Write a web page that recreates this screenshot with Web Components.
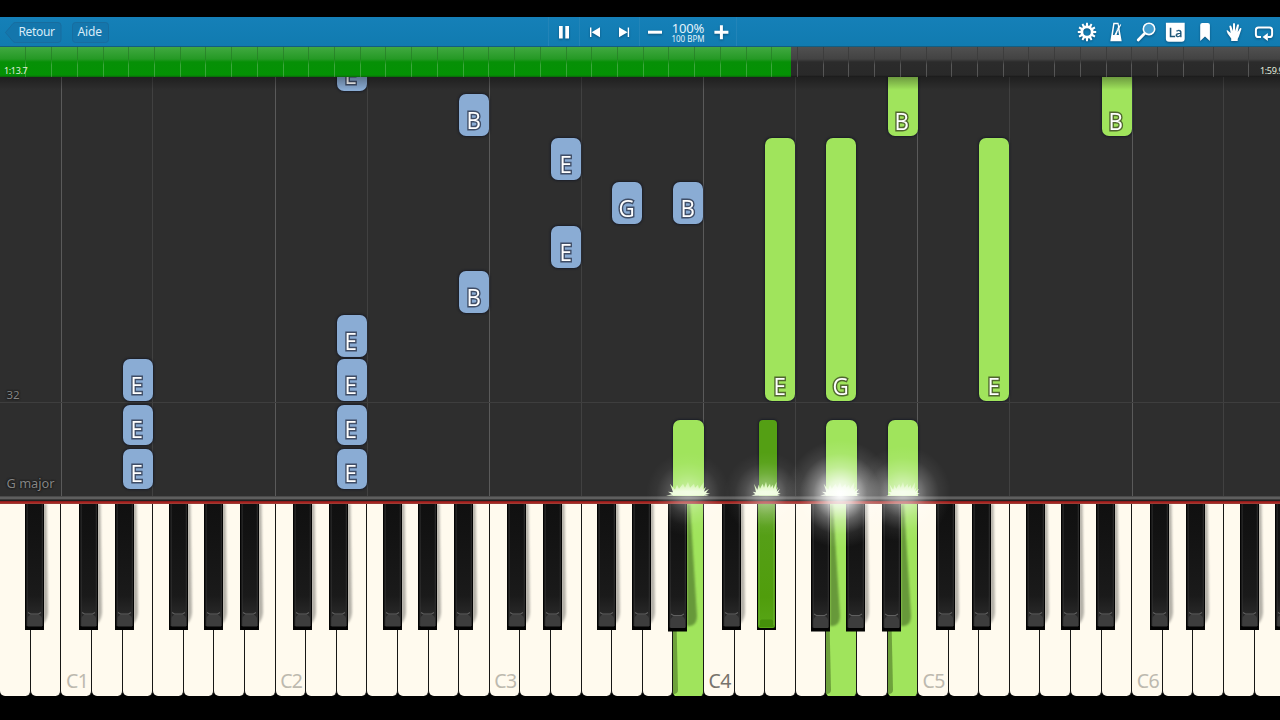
<!DOCTYPE html>
<html lang="fr">
<head>
<meta charset="utf-8">
<title>Piano</title>
<style>
  html, body {
    margin: 0;
    height: 100%;
    overflow: hidden;
    background: #000;
  }
</style>
</head>
<body>
<piano-app></piano-app>

<script>
const WHITE_WIDTH = 30.6;
const WHITE_COUNT = 42;
const OCTAVE = WHITE_WIDTH * 7;

function attach(el, html) {
  const template = document.createElement('template');
  template.innerHTML = html;
  const root = el.attachShadow({ mode: 'open' });
  root.appendChild(template.content.cloneNode(true));
  return root;
}

function gearTeeth() {
  let out = '';
  for (let i = 0; i < 12; i++) {
    out += `<path d="M8.700 4.600L9.100 .8h1.800l.4 3.800z" transform="rotate(${i * 30} 10 10)"/>`;
  }
  return out;
}

const icons = {
  pause: '<path d="M5 4h3.7v12.500H5zM11.300 4H15v12.500h-3.700z"/>',
  prev: '<path d="M5 5.500h1.400v9.500H5zM15 5.300v9.900L6.600 10.200z"/>',
  next: '<path d="M13.700 5.500h1.400v9.500h-1.400zM5 5.300v9.900l8.500-5z"/>',
  minus: '<path d="M3 8.700h14v3H3z"/>',
  plus: '<path d="M8.900 3.200h3v5.500H17.400v3h-5.500v5.500h-3v-5.500H3.400v-3h5.500z"/>',
  gear: gearTeeth() + '<circle cx="10" cy="10" r="5.100" fill="none" stroke="#fff" stroke-width="2.700"/>',
  metronome: '<path fill-rule="evenodd" d="M7.300 .8h5.200l3.200 18.500H4.300zM8.500 2.300L6.900 13h2.200l1.700-4 .7 1-1 3h2.500l-.7-4.500-.8-2.200-.3 0L9 12l3-7-.4-2.700z"/><path d="M9 13L14.700 2.500" stroke="#fff" stroke-width="1.300"/>',
  magnifier: '<path d="M8.800 11.200L2.200 18" stroke="#fff" stroke-width="2.800" stroke-linecap="round"/><circle cx="13" cy="6.900" r="5.700" fill="#469fd0" stroke="#fff" stroke-width="1.600"/>',
  label: '<path d="M.9 .7h18.800v16q0 3-3 3H3.900q-3 0-3-3z"/><text x="10.500" y="15.300" text-anchor="middle" font-size="12.500" fill="#1b5578" stroke="#1b5578" stroke-width=".35">La</text>',
  bookmark: '<path d="M5.200 3q0-2 2-2h5.700q2 0 2 2v16L10 14.600 5.200 19z"/>',
  hand: '<path d="M7.200 19v-2.500L3.600 11.600 2.500 8.500q1-.8 1.800.6l2.400 2L5.300 4q1.300-1.200 2 .3L9 9 9 1.700q1-1.400 2 0L11.200 9l1.900-6.300q1.500-1 1.900.6L13.700 10l2.500-4q1.400-.4 1.200 1L14.900 14.500 13.700 17v2z"/>',
  loop: '<path d="M7 15H4.500q-2.600 0-2.600-2.600V8.200q0-2.600 2.600-2.600h11q2.600 0 2.600 2.600v4.200q0 2.600-2.600 2.600H13.500" fill="none" stroke="#fff" stroke-width="2"/><path d="M13.800 11v8L8.600 15z"/>'
};

class PianoIcon extends HTMLElement {
  connectedCallback() {
    attach(this, `
      <style>
        :host {
          display: flex;
          align-items: center;
          justify-content: center;
          width: var(--icon-box, 29.5px);
        }
        svg {
          width: 20px;
          height: 20px;
          overflow: visible;
          fill: #fff;
          filter: drop-shadow(0 1px 1px rgb(0 30 60 / 45%));
        }
      </style>
      <svg viewBox="0 0 20 20">${icons[this.getAttribute('name')]}</svg>
    `);
  }
}

class ToolButton extends HTMLElement {
  connectedCallback() {
    const back = this.hasAttribute('back');
    const shape = back
      ? 'M.5 10.500L8 1.500Q9 .5 10.500 .5H53q3 0 3 3v14q0 3-3 3H10.500Q9 20.500 8 19.500z'
      : 'M3.500 .5h30q3 0 3 3v14q0 3-3 3h-30q-3 0-3-3v-14q0-3 3-3z';
    attach(this, `
      <style>
        :host {
          display: grid;
          width: ${back ? 57 : 37}px;
          height: 21px;
        }
        svg, span {
          grid-area: 1 / 1;
        }
        svg {
          width: 100%;
          height: 100%;
        }
        span {
          padding-left: ${back ? 13.5 : 5.5}px;
          font-size: 12px;
          line-height: 20px;
          letter-spacing: ${back ? -0.35 : -0.1}px;
          color: #d8ecf8;
        }
      </style>
      <svg><path d="${shape}" fill="#1476ac" stroke="#186d9f"/></svg>
      <span><slot></slot></span>
    `);
  }
}

class ToolBar extends HTMLElement {
  connectedCallback() {
    attach(this, `
      <style>
        :host {
          display: flex;
          height: 30px;
          box-sizing: border-box;
          background: linear-gradient(#1580b8, #117bb0);
          border-bottom: 1px solid #145d80;
        }
        .left {
          display: flex;
          gap: 10px;
          align-items: center;
          width: 543px;
          padding: 1px 0 0 5px;
        }
        .group {
          display: flex;
          border-left: 1px solid #2284b8;
          box-sizing: border-box;
        }
        .pause { width: 31px; --icon-box: 30px; }
        .skip { width: 60px; --icon-box: 29.5px; }
        .tempo { width: 98px; --icon-box: 31px; border-right: 1px solid #2284b8; }
        .rate {
          display: flex;
          flex-direction: column;
          align-items: center;
          width: 35px;
          padding-top: 4px;
          color: #e3f3fb;
          white-space: nowrap;
        }
        .rate b {
          font-weight: normal;
          font-size: 13px;
          line-height: 15px;
          letter-spacing: -0.2px;
        }
        .rate small {
          font-size: 8px;
          line-height: 5px;
        }
        .right {
          display: flex;
          margin-left: auto;
          padding-right: 1.5px;
        }
      </style>
      <div class="left">
        <tool-button back>Retour</tool-button>
        <tool-button>Aide</tool-button>
      </div>
      <div class="group pause"><piano-icon name="pause"></piano-icon></div>
      <div class="group skip">
        <piano-icon name="prev"></piano-icon>
        <piano-icon name="next"></piano-icon>
      </div>
      <div class="group tempo">
        <piano-icon name="minus"></piano-icon>
        <div class="rate"><b>100%</b><small>100 BPM</small></div>
        <piano-icon name="plus"></piano-icon>
      </div>
      <div class="right">
        <piano-icon name="gear"></piano-icon>
        <piano-icon name="metronome"></piano-icon>
        <piano-icon name="magnifier"></piano-icon>
        <piano-icon name="label"></piano-icon>
        <piano-icon name="bookmark"></piano-icon>
        <piano-icon name="hand"></piano-icon>
        <piano-icon name="loop"></piano-icon>
      </div>
    `);
  }
}

class SongTimeline extends HTMLElement {
  connectedCallback() {
    // the last two measures are slower, so they take more room
    const widths = Array(46).fill(25.72).concat([30, 35.5]);
    attach(this, `
      <style>
        :host {
          display: grid;
          height: 30px;
          overflow: hidden;
          background: linear-gradient(#505050 0, #434343 12px, #2b2b2b 15px, #292929 28px, #181818 30px);
        }
        .played, .measures, .times {
          grid-area: 1 / 1;
          min-width: 0;
        }
        .played {
          width: 791px;
          background: linear-gradient(#41a941 0, #259925 12px, #069006 15px, #049104 28px, #0b650b 30px);
        }
        .measures {
          display: flex;
          padding-left: .7px;
        }
        .measures i {
          flex: none;
          display: flex;
          justify-content: flex-end;
        }
        .measures i::after {
          content: '';
          width: 1px;
          background: linear-gradient(rgb(0 0 0 / 22%) 0, rgb(0 0 0 / 12%) 40%, rgb(255 255 255 / 22%) 60%, rgb(255 255 255 / 20%));
        }
        .times {
          display: flex;
          align-items: flex-end;
          padding: 0 0 0 4px;
          font-size: 9px;
          line-height: 12px;
          letter-spacing: -0.35px;
          color: #e2eede;
        }
        .times span { flex: none; width: 1256px; }
      </style>
      <div class="played"></div>
      <div class="measures">${widths.map((w) => `<i style="width:${w}px"></i>`).join('')}</div>
      <div class="times"><span>1:13.7</span><span>1:59.9</span></div>
    `);
  }
}

class FallingNote extends HTMLElement {
  connectedCallback() {
    const [x, y, w, h] = this.getAttribute('box').split(' ');
    attach(this, `
      <style>
        :host {
          position: absolute;
          left: ${x}px;
          top: ${y}px;
          width: ${w}px;
          height: ${h}px;
          display: flex;
          align-items: flex-end;
          justify-content: center;
          border-radius: 7px;
          background: #8aacd4;
          color: #fff;
          font-size: 24px;
          line-height: 32px;
          box-shadow: 0 0 2px 1px rgb(15 20 35 / 65%);
          --outline: #3f4d66;
        }
        :host([hand="right"]) {
          background: #a0e45c;
          line-height: 31px;
          --outline: #50672f;
        }
        :host([sharp]) {
          background: #549f14;
          border-radius: 4px;
        }
        :host([held]) {
          border-bottom-left-radius: 0;
          border-bottom-right-radius: 0;
        }
        span {
          margin-right: 1px;
          font-family: "Open Sans", "Noto Sans", sans-serif;
          transform: scaleX(.93);
          -webkit-text-stroke: 3px var(--outline);
          paint-order: stroke fill;
        }
      </style>
      <span><slot></slot></span>
    `);
  }
}

class NoteRoll extends HTMLElement {
  connectedCallback() {
    const left = [
      [336.5, -28, 42, 'E'], [459, 17, 42, 'B'], [551, 61, 42, 'E'], [612, 105, 42, 'G'],
      [673, 105, 42, 'B'], [551, 149, 42, 'E'], [459, 193.5, 42, 'B'], [336.5, 237.5, 42, 'E'],
      [336.5, 282, 42, 'E'], [336.5, 328, 40, 'E'], [336.5, 372, 40, 'E'],
      [122.6, 282, 42, 'E'], [122.6, 328, 40, 'E'], [122.6, 372, 40, 'E']
    ];
    const right = [
      [887.6, -40, 99, 'B'], [1101.6, -40, 99, 'B'], [765, 61, 263, 'E'],
      [826, 61, 263, 'G'], [979, 61, 263, 'E']
    ];
    const held = [[673, 30.5, ''], [759, 18, 'sharp'], [826, 30.5, ''], [887.6, 30, '']];

    const note = ([x, y, h, label], hand) =>
      `<falling-note hand="${hand}" box="${x} ${y} 30 ${h}">${label}</falling-note>`;

    attach(this, `
      <style>
        :host {
          position: relative;
          display: grid;
          height: 419px;
          overflow: hidden;
          background: #2e2e2e;
        }
        .lanes {
          grid-area: 1 / 1;
          display: flex;
          padding-left: 60.600px;
        }
        .lanes i {
          flex: none;
          box-sizing: border-box;
          border-left: 1px solid #5a5a5a;
          width: ${WHITE_WIDTH * 3}px;
        }
        .lanes i:nth-child(even) {
          border-color: #414141;
          width: ${WHITE_WIDTH * 4}px;
        }
        .marks {
          grid-area: 1 / 1;
          display: flex;
          flex-direction: column;
          justify-content: flex-end;
          color: #858585;
          font-size: 12.8px;
          text-shadow: 0 0 2px #111, 0 0 2px #111;
        }
        .marks div { padding-left: 6.5px; }
        .measure {
          height: 15px;
          font-size: 11.5px;
          line-height: 16px;
          border-bottom: 1px solid #3e3e3e;
        }
        .key {
          height: 93px;
          display: flex;
          align-items: flex-end;
          line-height: 25px;
        }
        .fade {
          position: absolute;
          inset: 0 0 auto;
          height: 13px;
          background: linear-gradient(rgb(0 0 0 / 32%), transparent);
        }
      </style>
      <div class="lanes">${'<i></i>'.repeat(12)}</div>
      <div class="marks">
        <div class="measure">32</div>
        <div class="key">G major</div>
      </div>
      ${left.map((n) => note(n, 'left')).join('')}
      ${right.map((n) => note(n, 'right')).join('')}
      ${held.map(([x, w, flag]) => `<falling-note hand="right" held ${flag} box="${x} 343.4 ${w} 80"></falling-note>`).join('')}
      <div class="fade"></div>
    `);
  }
}

class PianoKey extends HTMLElement {
  connectedCallback() {
    attach(this, `
      <style>
        :host {
          flex: none;
          position: relative;
          box-sizing: border-box;
          width: ${WHITE_WIDTH}px;
          height: 192px;
          display: flex;
          align-items: flex-end;
          background: #fffaee;
          border-right: 1px solid #171715;
          border-radius: 0 0 5px 5px;
          padding: 0 0 4px 4.500px;
          font-size: 19.5px;
          line-height: 22px;
          letter-spacing: -0.6px;
          color: #bdb9af;
        }
        :host([middle]) { color: #77736b; }
        :host([down]) {
          height: 193px;
          background: #a0e45c;
        }
        svg {
          position: absolute;
          left: 0;
          top: 0;
        }
      </style>
      ${this.hasAttribute('down') ? `
        <svg width="30" height="193">
          <path d="M0 0H1L5 186Q5 190 0 190z" fill="#5d8b32" opacity=".75"/>
        </svg>` : ''}
      <slot></slot>
    `);
  }
}

class BlackKey extends HTMLElement {
  connectedCallback() {
    const down = this.hasAttribute('down');
    const low = this.hasAttribute('low');
    const h = low ? 127.5 : 126;
    // a key beside a pressed white one drops a longer shadow on it
    const cast = this.hasAttribute('near')
      ? '<path d="M19 0H22L29 112Q29 121 22 122H19z" fill="#5a8730" opacity=".8" filter="url(#soft)"/>'
      : '<path d="M18 0H21.500L23 108Q22.500 116 18 120z" fill="#77756e" opacity=".55" filter="url(#soft)"/>';
    attach(this, `
      <style>
        :host {
          position: absolute;
          top: 0;
          left: ${this.getAttribute('x')}px;
          width: 19.5px;
          height: ${h}px;
        }
        svg { overflow: visible; display: block; }
      </style>
      <svg width="19.5" height="${h}">
        <defs>
          <filter id="soft" x="-50%" width="200%"><feGaussianBlur stdDeviation=".8"/></filter>
          <linearGradient id="body" x2="0" y2="1">
            <stop stop-color="${down ? '#6ba834' : '#101010'}"/>
            <stop offset=".2" stop-color="${down ? '#569f18' : '#121212'}"/>
            <stop offset=".75" stop-color="${down ? '#509d0c' : '#1a1a1a'}"/>
            <stop offset="1" stop-color="${down ? '#58a617' : '#303030'}"/>
          </linearGradient>
        </defs>
        ${down ? '' : cast}
        <path d="M0 0H19V${h}H0z" fill="#030303"/>
        ${down ? `
          <path d="M1 0H18V122Q18 124 16 124H3Q1 124 1 122z" fill="url(#body)"/>
          <path d="M2.500 117L4.500 115.500H14.500L16.500 117V123H2.500z" fill="#45900a"/>
          <path d="M2.200 0V121M16.800 0V121" stroke="#6eae3a" stroke-width=".8"/>
        ` : `
          <path d="M2 0H17.300V${h - 4}H2z" fill="url(#body)"/>
          <path d="M2 0V${h - 4}M17.300 0V${h - 4}" stroke="#3c3c3c" stroke-width=".8"/>
          <path d="M2.500 ${h - 3.5}V${h - 12}Q4 ${h - 15.5} 6 ${h - 15.5}H13Q15.500 ${h - 15.5} 17 ${h - 12}V${h - 3.5}z" fill="#3d3d3d"/>
          <path d="M3 ${h - 17.5}L5.500 ${h - 16}H13.500L16 ${h - 17.5}" fill="none" stroke="#606060" stroke-width="1.100"/>
        `}
      </svg>
    `);
  }
}

class PianoKeyboard extends HTMLElement {
  connectedCallback() {
    const pressed = [22, 27, 29];
    let whites = '';
    for (let i = 0; i < WHITE_COUNT; i++) {
      const octave = (i - 2) / 7 + 1;
      const label = Number.isInteger(octave) ? 'C' + octave : '';
      whites += `<piano-key ${pressed.includes(i) ? 'down' : ''} ${label === 'C4' ? 'middle' : ''}>${label}</piano-key>`;
    }

    // C# D# F# G# A# inside one octave
    const sharps = [18.2, 54, 108, 143, 178.8];
    const near = ['2-4', '3-2', '3-4'];
    const low = ['2-4', '3-2', '3-3', '3-4'];
    let blacks = '<black-key x="25.3"></black-key>';
    for (let o = 0; o < 6; o++) {
      sharps.forEach((dx, n) => {
        const id = `${o}-${n}`;
        const x = 60.8 + o * (OCTAVE - .03) + dx;
        if (x < 1280) {
          blacks += `<black-key x="${x.toFixed(1)}" ${id === '3-1' ? 'down' : ''} ${near.includes(id) ? 'near' : ''} ${low.includes(id) ? 'low' : ''}></black-key>`;
        }
      });
    }

    attach(this, `
      <style>
        :host {
          position: relative;
          display: flex;
          align-items: flex-start;
          box-sizing: border-box;
          padding-left: .3px;
          height: 193px;
          overflow: hidden;
        }
      </style>
      ${whites}${blacks}
    `);
  }
}

class HitSpark extends HTMLElement {
  connectedCallback() {
    const glow = this.getAttribute('glow');
    const r = this.getAttribute('r');
    const w = this.getAttribute('w') / 42;
    attach(this, `
      <style>
        :host {
          position: absolute;
          left: ${this.getAttribute('x') - 60}px;
          top: 436px;
          width: 120px;
          height: 120px;
        }
        svg { display: block; }
      </style>
      <svg width="120" height="120">
        <radialGradient id="glow">
          <stop stop-color="#fff" stop-opacity="${glow}"/>
          <stop offset=".25" stop-color="#fff" stop-opacity="${glow * .75}"/>
          <stop offset=".5" stop-color="#fff" stop-opacity="${glow * .35}"/>
          <stop offset=".75" stop-color="#fff" stop-opacity="${glow * .09}"/>
          <stop offset="1" stop-color="#fff" stop-opacity="0"/>
        </radialGradient>
        <linearGradient id="blades" x2="0" y2="1">
          <stop stop-color="#b4ec79"/>
          <stop offset=".7" stop-color="#e9fbd2"/>
        </linearGradient>
        <path transform="translate(60 59.800) scale(${w} 1)" fill="url(#blades)"
          d="M-22 0L-16-1.500-20-4-15-3.500-18-12-13-6-11-11-9-7-5-12-3-8 0-14 2-8 6-12 7-8 10-11 11-7 16-14 15-6 18-9 16-4 21-7 18-3 22-2 17-1 21 0z"/>
        <ellipse cx="60" cy="58" rx="${r}" ry="${r}" fill="url(#glow)"/>
      </svg>
    `);
  }
}

class PianoApp extends HTMLElement {
  connectedCallback() {
    attach(this, `
      <style>
        :host {
          position: relative;
          display: flex;
          flex-direction: column;
          box-sizing: border-box;
          width: 1280px;
          height: 720px;
          padding-top: 17px;
          overflow: hidden;
          background: #000;
          font-family: "Noto Sans", "Open Sans", sans-serif;
        }
        .rail {
          flex: none;
          height: 7px;
          background: linear-gradient(#4a4a4a 0 1px, #5e5e5e 1px 3px, #3b3b3b 3px 4px, #202020 4px 5px, #8e1c1c 5px 6px, #a82420 6px);
        }
        /* red felt running on over the top pixel of the white keys */
        piano-keyboard { border-top: 1px solid #9c3a34; margin-bottom: -1px; }
      </style>
      <tool-bar></tool-bar>
      <song-timeline></song-timeline>
      <note-roll></note-roll>
      <div class="rail"></div>
      <piano-keyboard style="box-sizing: border-box"></piano-keyboard>
      <hit-spark x="688" w="42" r="42" glow=".42"></hit-spark>
      <hit-spark x="766" w="28" r="42" glow=".45"></hit-spark>
      <hit-spark x="840" w="38" r="54" glow="1"></hit-spark>
      <hit-spark x="903" w="32" r="48" glow=".62"></hit-spark>
    `);
  }
}

customElements.define('piano-icon', PianoIcon);
customElements.define('tool-button', ToolButton);
customElements.define('tool-bar', ToolBar);
customElements.define('song-timeline', SongTimeline);
customElements.define('falling-note', FallingNote);
customElements.define('note-roll', NoteRoll);
customElements.define('piano-key', PianoKey);
customElements.define('black-key', BlackKey);
customElements.define('piano-keyboard', PianoKeyboard);
customElements.define('hit-spark', HitSpark);
customElements.define('piano-app', PianoApp);
</script>
</body>
</html>
